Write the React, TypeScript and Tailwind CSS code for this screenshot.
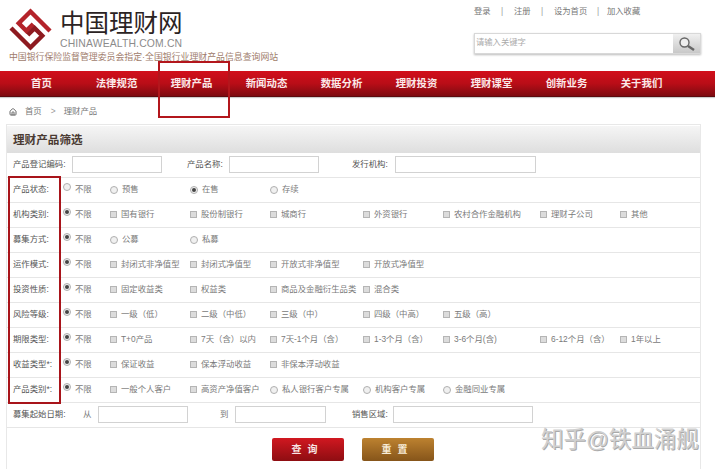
import { Home } from "lucide-react";

type Opt = { text: string; kind: "r" | "c"; on?: boolean };

const r = (text: string, on?: boolean): Opt => ({ text, kind: "r", on });
const c = (text: string): Opt => ({ text, kind: "c" });

const navItems = ["首页", "法律规范", "理财产品", "新闻动态", "数据分析", "理财投资", "理财课堂", "创新业务", "关于我们"];

const filterRows: { label: string; options: Opt[] }[] = [
  { label: "产品状态:", options: [r("不限"), r("预售"), r("在售", true), r("存续")] },
  {
    label: "机构类别:",
    options: [r("不限", true), c("国有银行"), c("股份制银行"), c("城商行"), c("外资银行"), c("农村合作金融机构"), c("理财子公司"), c("其他")],
  },
  { label: "募集方式:", options: [r("不限", true), r("公募"), r("私募")] },
  { label: "运作模式:", options: [r("不限", true), c("封闭式非净值型"), c("封闭式净值型"), c("开放式非净值型"), c("开放式净值型")] },
  { label: "投资性质:", options: [r("不限", true), c("固定收益类"), c("权益类"), c("商品及金融衍生品类"), c("混合类")] },
  { label: "风险等级:", options: [r("不限", true), c("一级（低）"), c("二级（中低）"), c("三级（中）"), c("四级（中高）"), c("五级（高）")] },
  {
    label: "期限类型:",
    options: [r("不限", true), c("T+0产品"), c("7天（含）以内"), c("7天-1个月（含）"), c("1-3个月（含）"), c("3-6个月(含)"), c("6-12个月（含）"), c("1年以上")],
  },
  { label: "收益类型*:", options: [r("不限", true), c("保证收益"), c("保本浮动收益"), c("非保本浮动收益")] },
  { label: "产品类别*:", options: [r("不限", true), c("一般个人客户"), c("高资产净值客户"), r("私人银行客户专属"), r("机构客户专属"), r("金融同业专属")] },
];

function Mark({ opt, first }: { opt: Opt; first: boolean }) {
  if (opt.kind === "c") {
    return <span className="mt-[1px] h-[7px] w-[7px] shrink-0 border border-[#b5b5b5] bg-[#dcdcdc]" />;
  }
  return (
    <span
      className={`flex h-[8px] w-[8px] shrink-0 items-center justify-center rounded-full border border-[#b0b0b0] bg-[#f0f0f0] ${
        first ? "-translate-y-[2px]" : "mt-[1px]"
      }`}
    >
      {opt.on && <span className="h-[4px] w-[4px] rounded-full bg-[#444]" />}
    </span>
  );
}

function TextBox({ className }: { className: string }) {
  return <span className={`h-[17px] border border-[#d2d2d2] bg-white ${className}`} />;
}

function Logo() {
  return (
    <svg viewBox="0 0 44 44" className="h-[43px] w-[43px] shrink-0" fill="none" strokeWidth="4.5">
      <g transform="rotate(45 22 22)">
        <path d="M37.25 9 H9 V26 H20 V16" stroke="#b4232a" />
        <path d="M6.75 35 H35 V18 H24 V28" stroke="#8e1a20" />
      </g>
    </svg>
  );
}

function Header() {
  return (
    <div className="flex h-[71px] justify-between">
      <div className="pl-[9px] pt-[8px]">
        <div className="flex h-[43px] gap-[8px]">
          <Logo />
          <div className="pt-[3px]">
            <div className="text-[24.5px] leading-[25px] text-[#2b2323]">中国理财网</div>
            <div className="mt-[2px] text-[10.4px] leading-[12px] tracking-[0.15px] text-[#8b8b8b]">CHINAWEALTH.COM.CN</div>
          </div>
        </div>
        <div className="mt-[1px] whitespace-nowrap text-[8.9px] leading-[10px] text-[#a07c6c]">
          中国银行保险监督管理委员会指定·全国银行业理财产品信息查询网站
        </div>
      </div>
      <div className="w-[241px] pt-[6px]">
        <div className="flex h-[10px] items-center text-[8.3px] leading-[10px] text-[#777]">
          <span className="w-[27px]">登录</span>
          <span className="w-[13px] text-[#999]">|</span>
          <span className="w-[27px]">注册</span>
          <span className="w-[13px] text-[#999]">|</span>
          <span className="w-[43px]">设为首页</span>
          <span className="w-[10px] text-[#999]">|</span>
          <span>加入收藏</span>
        </div>
        <div className="mt-[17px] flex h-[21px] w-[227px] border border-[#d8d8d8] bg-white shadow-[0_1px_2px_#bbb]">
          <span className="flex-1 pl-[1px] text-[8.3px] leading-[17px] text-[#aaa]">请输入关键字</span>
          <span className="flex w-[27px] items-center justify-center bg-gradient-to-b from-[#f0f0f0] to-[#c8c8c8]">
            <svg viewBox="0 0 20 16" className="h-[16px] w-[20px]" fill="none" stroke="#666">
              <circle cx="7.5" cy="6.5" r="4.5" strokeWidth="1.4" fill="#eee" />
              <path d="M11 10 L17 14" strokeWidth="2.4" />
            </svg>
          </span>
        </div>
      </div>
    </div>
  );
}

function Nav() {
  return (
    <nav className="flex h-[26px] items-center border-b border-[#5c0a0e] bg-gradient-to-b from-[#d20f1b] via-[#b90d17] to-[#7e0a10] pl-[4px] shadow-[0_1px_1px_#ccc]">
      {navItems.map((item) => (
        <span key={item} className="w-[75px] text-center text-[10.4px] font-bold leading-[26px] text-[#fbe9e9]">
          {item}
        </span>
      ))}
    </nav>
  );
}

function Crumbs() {
  return (
    <div className="flex h-[27px] items-center pl-[9px] pt-[2px] text-[8.4px] text-[#777]">
      <Home size={8} strokeWidth={3} className="text-[#666]" />
      <span className="ml-[8px]">首页</span>
      <span className="ml-[9px] mr-[8px] text-[#999]">&gt;</span>
      <span>理财产品</span>
    </div>
  );
}

function FilterRow({ label, options }: { label: string; options: Opt[] }) {
  return (
    <div className="flex h-[25px] items-center border-b border-[#e6e6e6] pb-[1px] pl-[6px]">
      <span className="w-[50px] whitespace-nowrap text-[8.4px] text-[#555]">{label}</span>
      <div className="grid grid-cols-[47px_80px_80px_93px_80px_97px_80px_60px]">
        {options.map((opt, i) => (
          <span key={opt.text} className="flex items-center gap-[4px] whitespace-nowrap text-[8.4px] text-[#7a7a7a]">
            <Mark opt={opt} first={i === 0} />
            {opt.text}
          </span>
        ))}
      </div>
    </div>
  );
}

function Filters() {
  return (
    <section className="ml-[6px] mr-[14px] border-x border-t border-[#e8e8e8] pt-[1px]">
      <h2 className="flex h-[27px] items-center bg-gradient-to-b from-[#f5f5f5] to-[#dedede] pl-[6px] text-[11.6px] font-bold text-[#4a3a32]">
        理财产品筛选
      </h2>
      <div className="flex h-[25px] items-center gap-[5px] border-b border-[#e6e6e6] pb-[1px] pl-[6px] text-[8.4px] text-[#555]">
        <span className="w-[54px] whitespace-nowrap">产品登记编码:</span>
        <TextBox className="w-[90px]" />
        <span className="ml-[20px] w-[37px] whitespace-nowrap">产品名称:</span>
        <TextBox className="w-[90px]" />
        <span className="ml-[28px] w-[38px] whitespace-nowrap">发行机构:</span>
        <TextBox className="w-[141px]" />
      </div>
      {filterRows.map((row) => (
        <FilterRow key={row.label} label={row.label} options={row.options} />
      ))}
      <div className="flex h-[25px] items-center border-b border-[#e6e6e6] pb-[1px] pl-[6px] text-[8.4px] text-[#555]">
        <span className="w-[70px] whitespace-nowrap">募集起始日期:</span>
        <span className="w-[15px] text-[#777]">从</span>
        <TextBox className="w-[90px]" />
        <span className="ml-[32px] w-[15px] text-[#777]">到</span>
        <TextBox className="w-[91px]" />
        <span className="ml-[26px] w-[41px] whitespace-nowrap">销售区域:</span>
        <TextBox className="w-[140px]" />
      </div>
      <div className="flex h-[41px] items-start justify-center gap-[18px] pr-[2px] pt-[10px]">
        <button type="button" className="h-[23px] w-[72px] rounded-[2px] bg-gradient-to-b from-[#d11820] to-[#8e0d12] text-[10px] font-bold tracking-[6px] text-[#f7e4e4]">
          查询
        </button>
        <button type="button" className="h-[23px] w-[72px] rounded-[2px] bg-gradient-to-b from-[#bd8230] to-[#86551a] text-[10px] font-bold tracking-[6px] text-[#f7ecd8]">
          重置
        </button>
      </div>
    </section>
  );
}

export default function App() {
  return (
    <div className="relative h-[469px] w-[715px] overflow-hidden bg-white font-['Liberation_Sans','Noto_Sans_CJK_SC',sans-serif]">
      <Header />
      <Nav />
      <Crumbs />
      <Filters />
      {/* red annotations drawn over the page */}
      <div className="absolute left-[158px] top-[61px] h-[57px] w-[72px] border-2 border-[#b3161c]" />
      <div className="absolute left-[8px] top-[176px] h-[228px] w-[53px] border-2 border-[#a8141a]" />
      <div className="absolute left-[541px] top-[427px] whitespace-nowrap text-[22.5px] leading-[26px] text-[#d0d0d0] [text-shadow:1px_1px_0_#aaa]">
        知乎@铁血涌舰
      </div>
    </div>
  );
}
